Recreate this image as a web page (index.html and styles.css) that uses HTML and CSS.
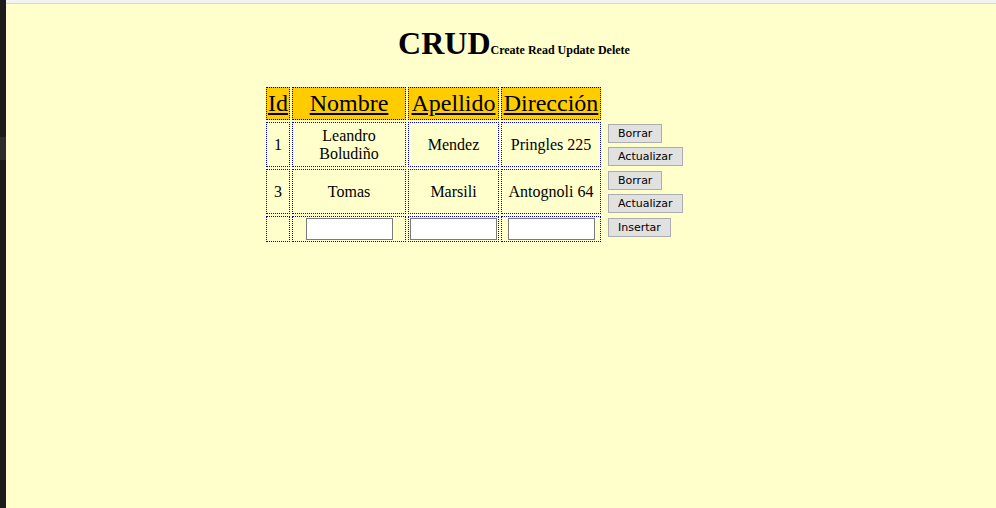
FILE: index.html
```html
<!DOCTYPE html>
<html lang="es">
<head>
<meta charset="utf-8">
<title>CRUD</title>
<link rel="stylesheet" href="styles.css">
</head>
<body>
<div class="frame">
  <div class="side"><div class="side-mark"></div></div>
  <div class="main">
    <div class="topbar"></div>
    <div class="page">
      <h1 class="title">CRUD<small class="subtitle">Create Read Update Delete</small></h1>
      <table class="grid">
        <thead>
          <tr>
            <th class="c-id">Id</th>
            <th class="c-nom">Nombre</th>
            <th class="c-ape">Apellido</th>
            <th class="c-dir">Dirección</th>
            <th class="c-act"></th>
          </tr>
        </thead>
        <tbody>
          <tr>
            <td>1</td>
            <td>Leandro Boludiño</td>
            <td>Mendez</td>
            <td>Pringles 225</td>
            <td class="actions"><button class="btn">Borrar</button><button class="btn">Actualizar</button></td>
          </tr>
          <tr>
            <td>3</td>
            <td>Tomas</td>
            <td>Marsili</td>
            <td>Antognoli 64</td>
            <td class="actions"><button class="btn">Borrar</button><button class="btn">Actualizar</button></td>
          </tr>
          <tr class="new-row">
            <td></td>
            <td><input class="field" type="text"></td>
            <td><input class="field" type="text"></td>
            <td><input class="field" type="text"></td>
            <td class="actions"><button class="btn">Insertar</button></td>
          </tr>
        </tbody>
      </table>
    </div>
  </div>
</div>
</body>
</html>
```
FILE: styles.css
```css
* { box-sizing: border-box; }
html, body { margin: 0; padding: 0; }
body {
  width: 996px;
  height: 508px;
  overflow: hidden;
  background: #ffffcc;
  font-family: "Liberation Serif", "Times New Roman", serif;
}
.frame {
  display: flex;
  height: 508px;
}
.side {
  width: 6px;
  flex: none;
  background: #1c1c1c;
  padding-top: 137px;
}
.side-mark {
  height: 23px;
  background: #2d2d2d;
}
.main {
  flex: 1;
  display: flex;
  flex-direction: column;
}
.topbar {
  height: 4px;
  background: #f3f3f3;
  border-bottom: 1px solid #d6d6d6;
}
.page {
  flex: 1;
  background: #ffffcc;
}
.title {
  margin: 21px 0 0 0;
  padding-left: 26px;
  text-align: center;
  font-size: 32px;
  font-weight: bold;
  line-height: 37px;
  color: #000;
}
.subtitle {
  font-size: 12px;
  font-weight: bold;
}
.grid {
  margin: 16px 0 0 258px;
  table-layout: fixed;
  width: 425px;
  border-collapse: separate;
  border-spacing: 2px;
  font-size: 16px;
}
.grid th {
  background: #ffcc00;
  border: 1px dotted #000060;
  font-weight: normal;
  font-size: 24px;
  line-height: 29px;
  text-decoration: underline;
  padding: 1px 0;
  white-space: nowrap;
}
.grid th.c-act {
  background: transparent;
  border: none;
}
.c-id { width: 24px; }
.c-nom { width: 114px; }
.c-ape { width: 91px; }
.c-dir { width: 100px; }
.c-act { width: 84px; }
.grid td {
  border: 1px dotted #0000c0;
  text-align: center;
  vertical-align: middle;
  padding: 1px 2px;
  line-height: 18px;
}
.grid td.actions {
  border: none;
  text-align: left;
  vertical-align: top;
  padding: 2px 0 1px 5px;
  line-height: 0;
}
.new-row td { padding: 1px 0; }
.new-row td.actions { padding: 2px 0 1px 5px; }
.btn {
  display: block;
  height: 19px;
  margin: 0;
  padding: 0 9px;
  font-family: "DejaVu Sans", Tahoma, sans-serif;
  font-size: 11px;
  line-height: 17px;
  color: #000;
  background: #e1e1e1;
  border: 1px solid #adadad;
  border-radius: 0;
}
.btn + .btn { margin-top: 4px; }
.field {
  display: block;
  margin: 0 auto;
  width: 87px;
  height: 22px;
  border: 1px solid #7a7a7a;
  background: #fff;
  padding: 0;
}
```
